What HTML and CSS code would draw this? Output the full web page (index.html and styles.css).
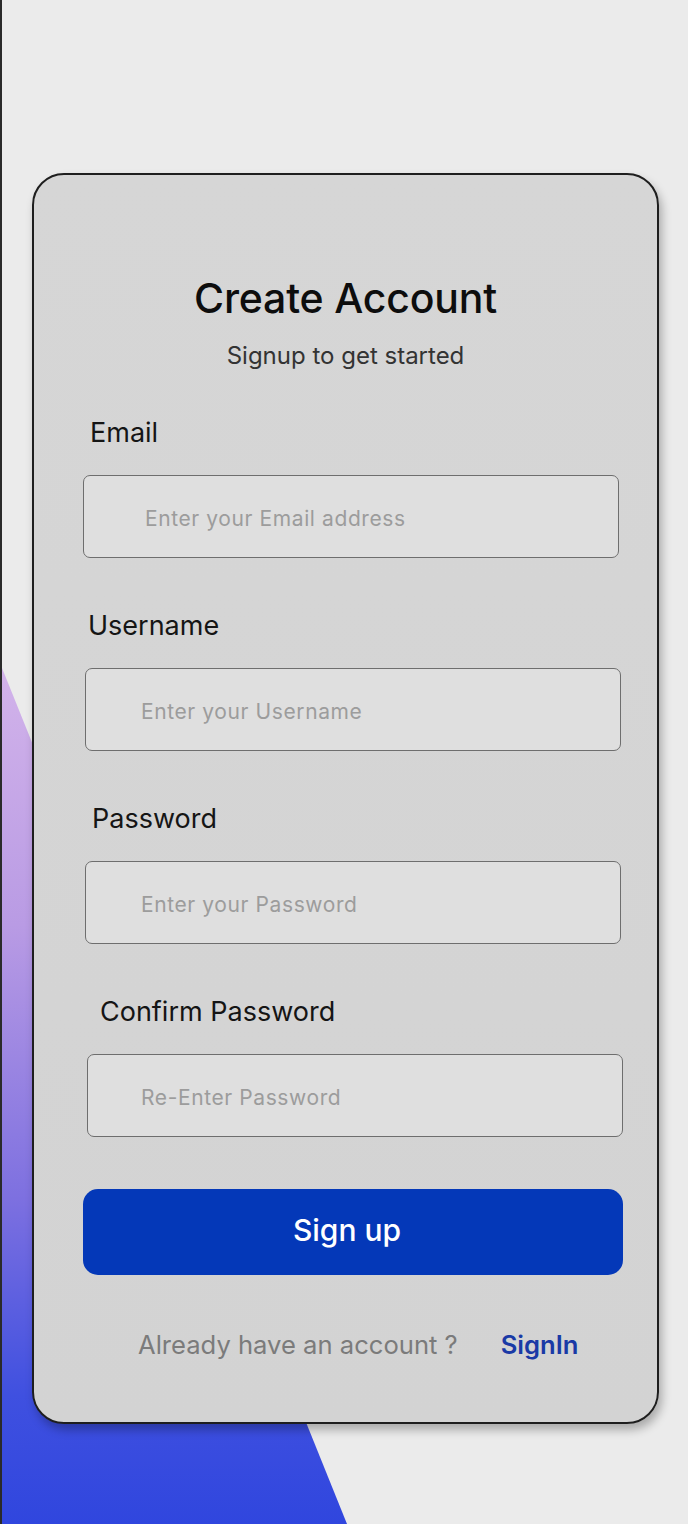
FILE: index.html
```html
<!DOCTYPE html>
<html lang="en">
<head>
<meta charset="utf-8">
<title>Create Account</title>
<link rel="stylesheet" href="styles.css">
</head>
<body>
<div class="bg-shape"></div>
<main class="card">
  <h1 class="title">Create Account</h1>
  <p class="subtitle">Signup to get started</p>

  <div class="field">
    <label class="label label-email">Email</label>
    <div class="input"><span class="ph">Enter your Email address</span></div>
  </div>
  <div class="field">
    <label class="label label-user">Username</label>
    <div class="input input-shift"><span class="ph">Enter your Username</span></div>
  </div>
  <div class="field">
    <label class="label label-pass">Password</label>
    <div class="input input-shift"><span class="ph">Enter your Password</span></div>
  </div>
  <div class="field">
    <label class="label label-confirm">Confirm Password</label>
    <div class="input input-shift2"><span class="ph">Re-Enter Password</span></div>
  </div>

  <button class="btn">Sign up</button>

  <div class="footer">
    <span class="muted">Already have an account ?</span>
    <a class="link">SignIn</a>
  </div>
</main>
</body>
</html>
```

FILE: styles.css
```css
* { box-sizing: border-box; }
html, body { margin: 0; padding: 0; }
body {
  width: 688px;
  height: 1524px;
  overflow: hidden;
  background: #ebebeb;
  border-left: 2px solid #2a2a2a;
  font-family: Inter, "Noto Sans", sans-serif;
  position: relative;
}
.bg-shape {
  position: absolute;
  left: 0;
  top: 668px;
  width: 345px;
  height: 856px;
  background: linear-gradient(180deg, #d2b3ea 0%, #b99be4 30%, #7d70e0 62%, #3f50e0 85%, #3046de 100%);
  clip-path: polygon(0 0, 100% 100%, 0 100%);
}
.card {
  position: relative;
  margin: 173px 0 0 30px;
  width: 627px;
  height: 1251px;
  border: 2px solid #1e1e1e;
  border-radius: 32px;
  background: linear-gradient(180deg, #d6d6d6 0%, #d3d3d3 100%);
  box-shadow: 3px 6px 10px rgba(0, 0, 0, 0.28);
  padding: 100px 0 0 49px;
}
.title {
  margin: 0 0 0 -49px;
  text-align: center;
  font-size: 41px;
  line-height: 46px;
  font-weight: 500;
  color: #0d0d0d;
  letter-spacing: -0.2px;
}
.subtitle {
  margin: 21px 0 0 -49px;
  text-align: center;
  font-size: 24px;
  line-height: 28px;
  color: #333;
}
.field { display: flex; flex-direction: column; align-items: flex-start; }
.field + .field { margin-top: 52px; }
.subtitle + .field { margin-top: 47px; }
.label {
  display: block;
  font-size: 27px;
  line-height: 32px;
  color: #151515;
  margin-bottom: 26px;
}
.label-email { padding-left: 7px; }
.label-user { padding-left: 5px; }
.label-pass { padding-left: 9px; }
.label-confirm { padding-left: 17px; }
.input {
  width: 536px;
  height: 83px;
  border: 1.5px solid #6e6e6e;
  border-radius: 7px;
  background: #dfdfdf;
  display: flex;
  align-items: center;
  padding-left: 61px;
  padding-top: 4px;
}
.input-shift { margin-left: 2px; padding-left: 55px; }
.input-shift2 { margin-left: 4px; padding-left: 53px; }
.ph {
  font-size: 21px;
  color: #9c9c9c;
  letter-spacing: 0.6px;
}
.btn {
  display: flex;
  align-items: center;
  justify-content: center;
  margin-top: 52px;
  width: 540px;
  height: 86px;
  border: none;
  border-radius: 15px;
  background: #0438b8;
  color: #fff;
  font-family: Inter, "Noto Sans", sans-serif;
  font-size: 30px;
  font-weight: 500;
  padding: 0 12px 4px 0;
}
.footer {
  display: flex;
  align-items: center;
  gap: 43px;
  margin-top: 53px;
  padding-left: 55px;
  height: 32px;
}
.muted {
  font-size: 25.6px;
  color: #7b7b7b;
}
.link {
  font-size: 25.6px;
  font-weight: 600;
  color: #1a3aa6;
}
```
